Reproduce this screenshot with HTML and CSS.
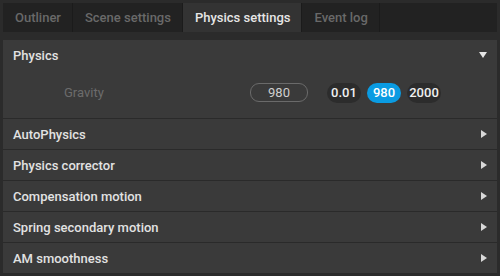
FILE: index.html
```html
<!DOCTYPE html>
<html lang="en">
<head>
    <meta charset="UTF-8">
    <title>Physics settings</title>
    <link rel="stylesheet" href="styles.css">
</head>
<body>
    <div class="window">
        <div class="tabs">
            <div class="tab">Outliner</div>
            <div class="tab">Scene settings</div>
            <div class="tab active">Physics settings</div>
            <div class="tab">Event log</div>
        </div>
        <div class="panel">
            <div class="section open">
                <div class="section-header">
                    <span>Physics</span>
                    <span class="arrow down"></span>
                </div>
                <div class="section-body">
                    <div class="field">
                        <label class="field-label">Gravity</label>
                        <div class="num-input">980</div>
                        <div class="presets">
                            <button class="preset">0.01</button>
                            <button class="preset selected">980</button>
                            <button class="preset">2000</button>
                        </div>
                    </div>
                </div>
            </div>
            <div class="section">
                <div class="section-header"><span>AutoPhysics</span><span class="arrow right"></span></div>
            </div>
            <div class="section">
                <div class="section-header"><span>Physics corrector</span><span class="arrow right"></span></div>
            </div>
            <div class="section">
                <div class="section-header"><span>Compensation motion</span><span class="arrow right"></span></div>
            </div>
            <div class="section">
                <div class="section-header"><span>Spring secondary motion</span><span class="arrow right"></span></div>
            </div>
            <div class="section">
                <div class="section-header"><span>AM smoothness</span><span class="arrow right"></span></div>
            </div>
        </div>
    </div>
</body>
</html>
```

FILE: styles.css
```css
html, body {
    margin: 0;
    padding: 0;
    background: #2b2b2b;
    font-family: Roboto, "Liberation Sans", sans-serif;
    font-size: 13px;
}
.window {
    width: 500px;
    height: 276px;
    overflow: hidden;
    box-sizing: border-box;
    padding-top: 3px;
    padding-left: 3px;
    padding-right: 3px;
    background: #2b2b2b;
}
.tabs {
    display: flex;
    height: 29px;
    background: #222222;
}
.tab {
    padding: 0 11px 0 12px;
    line-height: 29px;
    color: #696969;
    border-right: 1px solid #1b1b1b;
    font-weight: 500;
}
.tab.active {
    background: #333333;
    color: #e6e6e6;
}
.panel {
    margin-top: 8px;
    background: #3a3a3a;
}
.section {
    border-bottom: 1px solid #2a2a2a;
}
.section-header {
    display: flex;
    justify-content: space-between;
    align-items: center;
    height: 30px;
    padding: 0 10px 0 10px;
    color: #e2e2e2;
    font-weight: 500;
}
.arrow {
    width: 0;
    height: 0;
}
.arrow.down {
    border-left: 4px solid transparent;
    border-right: 4px solid transparent;
    border-top: 6px solid #e6e6e6;
}
.arrow.right {
    border-top: 4px solid transparent;
    border-bottom: 4px solid transparent;
    border-left: 6px solid #d8d8d8;
}
.section-body {
    height: 48px;
    display: flex;
    align-items: center;
}
.field {
    display: flex;
    align-items: center;
    margin-top: -3px;
}
.field-label {
    width: 61px;
    margin-left: 61px;
    margin-right: 125px;
    color: #6c6c6c;
}
.num-input {
    width: 56px;
    height: 17px;
    line-height: 17px;
    text-align: center;
    border: 1px solid #6a6a6a;
    border-radius: 9px;
    color: #cfcfcf;
}
.presets {
    display: flex;
    gap: 6px;
    margin-left: 19px;
}
.preset {
    font-family: inherit;
    font-size: 13px;
    font-weight: 500;
    border: none;
    padding: 0;
    width: 34px;
    height: 20px;
    border-radius: 10px;
    background: #2c2c2c;
    color: #f0f0f0;
}
.preset.selected {
    background: #0a9be2;
    color: #ffffff;
}
```
